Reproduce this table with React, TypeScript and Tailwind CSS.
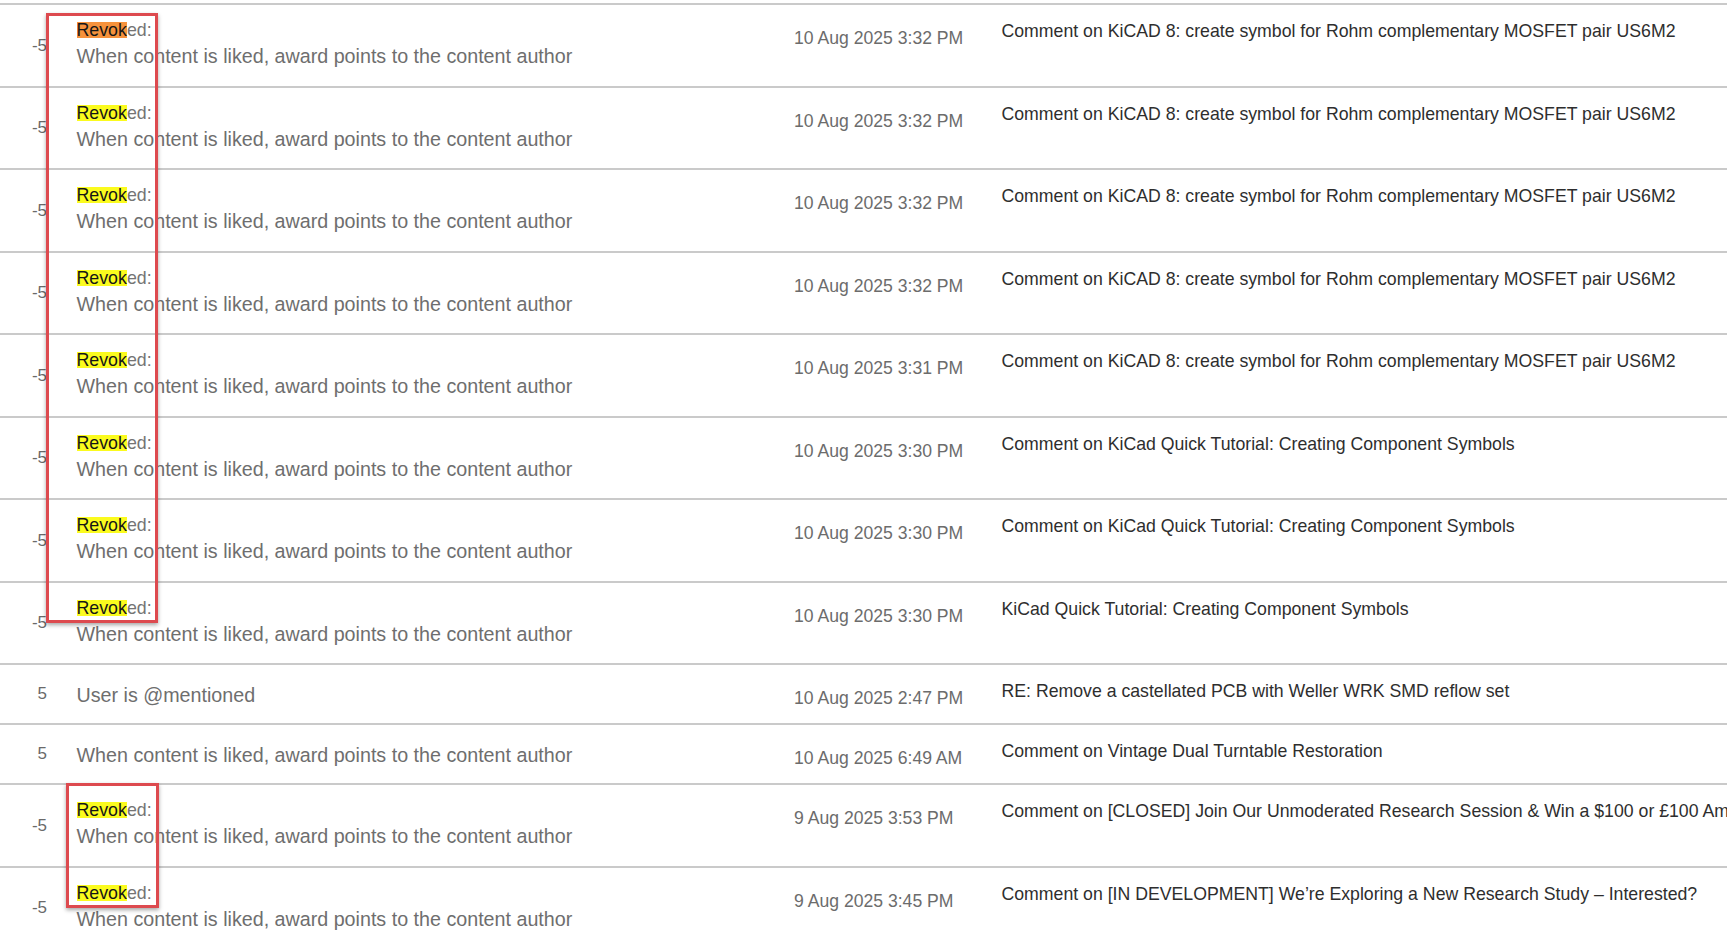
import React from 'react'

type Row = {
  points: string
  revoked?: 'orange' | 'yellow'
  reason: string
  date: string
  title: string
}

const LIKED = 'When content is liked, award points to the content author'
const KICAD8 = 'Comment on KiCAD 8: create symbol for Rohm complementary MOSFET pair US6M2'
const QUICK = 'Comment on KiCad Quick Tutorial: Creating Component Symbols'

const rows: Row[] = [
  { points: '-5', revoked: 'orange', reason: LIKED, date: '10 Aug 2025 3:32 PM', title: KICAD8 },
  { points: '-5', revoked: 'yellow', reason: LIKED, date: '10 Aug 2025 3:32 PM', title: KICAD8 },
  { points: '-5', revoked: 'yellow', reason: LIKED, date: '10 Aug 2025 3:32 PM', title: KICAD8 },
  { points: '-5', revoked: 'yellow', reason: LIKED, date: '10 Aug 2025 3:32 PM', title: KICAD8 },
  { points: '-5', revoked: 'yellow', reason: LIKED, date: '10 Aug 2025 3:31 PM', title: KICAD8 },
  { points: '-5', revoked: 'yellow', reason: LIKED, date: '10 Aug 2025 3:30 PM', title: QUICK },
  { points: '-5', revoked: 'yellow', reason: LIKED, date: '10 Aug 2025 3:30 PM', title: QUICK },
  { points: '-5', revoked: 'yellow', reason: LIKED, date: '10 Aug 2025 3:30 PM', title: 'KiCad Quick Tutorial: Creating Component Symbols' },
  { points: '5', reason: 'User is @mentioned', date: '10 Aug 2025 2:47 PM', title: 'RE: Remove a castellated PCB with Weller WRK SMD reflow set' },
  { points: '5', reason: LIKED, date: '10 Aug 2025 6:49 AM', title: 'Comment on Vintage Dual Turntable Restoration' },
  {
    points: '-5',
    revoked: 'yellow',
    reason: LIKED,
    date: '9 Aug 2025 3:53 PM',
    title: 'Comment on [CLOSED] Join Our Unmoderated Research Session & Win a $100 or £100 Amazon Voucher!',
  },
  {
    points: '-5',
    revoked: 'yellow',
    reason: LIKED,
    date: '9 Aug 2025 3:45 PM',
    title: 'Comment on [IN DEVELOPMENT] We\u2019re Exploring a New Research Study \u2013 Interested?',
  },
]

function PointsRow({ row }: { row: Row }) {
  const tall = !!row.revoked
  return (
    <div
      className={`flex border-t-2 border-[#cacaca] ${tall ? 'h-[82.5px]' : 'h-[60px]'}`}
    >
      {/* Points */}
      <div className="w-[47px] shrink-0 self-center text-right text-[17px] leading-[24px] text-[#6a6a6a]">
        {row.points}
      </div>

      {/* Reason */}
      <div className={`w-[747px] shrink-0 pl-[29.5px] ${tall ? 'pt-[13px]' : 'pt-[16px]'}`}>
        {row.revoked && (
          <div className="flex h-[24px] items-center text-[17.8px]">
            <span
              className={`block h-[16px] leading-[16px] text-[#161616] ${
                row.revoked === 'orange' ? 'bg-[#f6923c]' : 'bg-[#fbfb1e]'
              }`}
            >
              Revok
            </span>
            <span className="block leading-[16px] text-[#747474]">ed:</span>
          </div>
        )}
        <div className="whitespace-nowrap text-[19.7px] leading-[29px] text-[#6e6e6e]">{row.reason}</div>
      </div>

      {/* Date */}
      <div className="w-[207.5px] shrink-0 whitespace-nowrap pt-[20px] text-[17.6px] leading-[26px] text-[#6c6c6c]">
        {row.date}
      </div>

      {/* Content */}
      <div className="shrink-0 whitespace-nowrap pt-[13px] text-[17.7px] leading-[26px] text-[#2e2e2e]">
        {row.title}
      </div>
    </div>
  )
}

export default function App() {
  return (
    <div
      className="relative h-screen w-full overflow-hidden bg-white pt-[3.4px]"
      style={{ fontFamily: '"Liberation Sans", Arial, sans-serif' }}
    >
      {rows.map((row, i) => (
        <PointsRow key={i} row={row} />
      ))}

      {/* annotation boxes */}
      <div className="pointer-events-none absolute left-[46px] top-[12.5px] h-[610px] w-[112px] border-[3px] border-[#dd4a4f] shadow-[0_2px_4px_rgba(0,0,0,0.35)]" />
      <div className="pointer-events-none absolute left-[65.5px] top-[782.5px] h-[125px] w-[93px] border-[3px] border-[#dd4a4f] shadow-[0_2px_4px_rgba(0,0,0,0.35)]" />
    </div>
  )
}
